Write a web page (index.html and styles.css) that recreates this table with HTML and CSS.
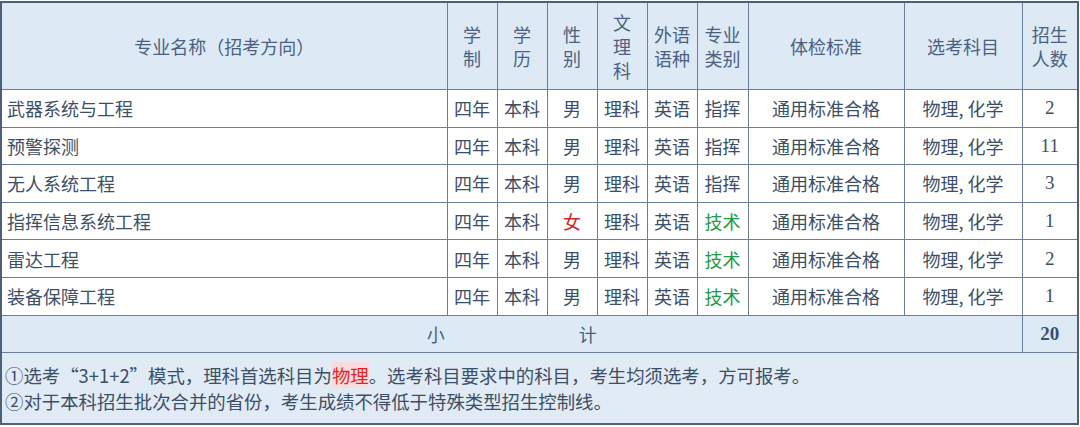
FILE: index.html
```html
<!DOCTYPE html>
<html lang="zh">
<head>
<meta charset="utf-8">
<link rel="stylesheet" href="styles.css">
</head>
<body>
<table class="plan">
  <colgroup>
    <col class="c-name"><col class="c-s"><col class="c-s"><col class="c-s"><col class="c-s"><col class="c-s"><col class="c-s2"><col class="c-tj"><col class="c-xk"><col class="c-n">
  </colgroup>
  <thead>
    <tr class="head">
      <th>专业名称（招考方向）</th>
      <th>学<br>制</th>
      <th>学<br>历</th>
      <th>性<br>别</th>
      <th>文<br>理<br>科</th>
      <th>外语<br>语种</th>
      <th>专业<br>类别</th>
      <th>体检标准</th>
      <th>选考科目</th>
      <th>招生<br>人数</th>
    </tr>
  </thead>
  <tbody>
    <tr class="row"><td class="name">武器系统与工程</td><td>四年</td><td>本科</td><td>男</td><td>理科</td><td>英语</td><td>指挥</td><td>通用标准合格</td><td>物理, 化学</td><td class="num">2</td></tr>
    <tr class="row"><td class="name">预警探测</td><td>四年</td><td>本科</td><td>男</td><td>理科</td><td>英语</td><td>指挥</td><td>通用标准合格</td><td>物理, 化学</td><td class="num">11</td></tr>
    <tr class="row"><td class="name">无人系统工程</td><td>四年</td><td>本科</td><td>男</td><td>理科</td><td>英语</td><td>指挥</td><td>通用标准合格</td><td>物理, 化学</td><td class="num">3</td></tr>
    <tr class="row"><td class="name">指挥信息系统工程</td><td>四年</td><td>本科</td><td class="red">女</td><td>理科</td><td>英语</td><td class="green">技术</td><td>通用标准合格</td><td>物理, 化学</td><td class="num">1</td></tr>
    <tr class="row"><td class="name">雷达工程</td><td>四年</td><td>本科</td><td>男</td><td>理科</td><td>英语</td><td class="green">技术</td><td>通用标准合格</td><td>物理, 化学</td><td class="num">2</td></tr>
    <tr class="row"><td class="name">装备保障工程</td><td>四年</td><td>本科</td><td>男</td><td>理科</td><td>英语</td><td class="green">技术</td><td>通用标准合格</td><td>物理, 化学</td><td class="num">1</td></tr>
    <tr class="sub"><td colspan="9"><span>小</span><span class="gap"></span><span>计</span></td><td class="num total">20</td></tr>
    <tr class="note"><td colspan="10">①选考“3+1+2”模式，理科首选科目为<span class="hl">物理</span>。选考科目要求中的科目，考生均须选考，方可报考。<br>②对于本科招生批次合并的省份，考生成绩不得低于特殊类型招生控制线。</td></tr>
  </tbody>
</table>
</body>
</html>
```
FILE: styles.css
```css
html, body {
  margin: 0;
  padding: 0;
  background: #ffffff;
}
body {
  padding-top: 1px;
  font-family: "Noto Sans CJK SC", "Noto Sans", sans-serif;
  color: #3d4f66;
}
.plan {
  border-collapse: collapse;
  table-layout: fixed;
  width: 1079px;
  border: 2px solid #4c6079;
  font-size: 18px;
}
.c-name { width: 446px; }
.c-s { width: 50px; }
.c-s2 { width: 51px; }
.c-tj { width: 156px; }
.c-xk { width: 118px; }
.c-n { width: 56px; }
.plan th, .plan td {
  border: 1px solid #6b7f99;
  padding: 0;
  text-align: center;
  font-weight: normal;
  line-height: 24px;
}
.head th {
  height: 86px;
  background: #dde9f5;
  color: #4a6282;
  line-height: 24px;
}
.row td { height: 36.6px; }
.row td.name {
  text-align: left;
  padding-left: 5px;
}
.num {
  font-family: "Liberation Serif", "DejaVu Serif", serif;
  font-size: 19px;
}
.red { color: #d2231f; }
.green { color: #1f9b46; }
.sub td {
  background: #dde9f5;
  color: #4a6282;
  height: 36px;
}
.gap {
  display: inline-block;
  width: 134px;
}
.sub td.total {
  font-weight: bold;
  color: #34507a;
}
.note td {
  background: #e0ebf6;
  text-align: left;
  padding-left: 3px;
  font-size: 18.4px;
  line-height: 26px;
  height: 70px;
  vertical-align: middle;
  color: #3d4f66;
}
.hl {
  color: #e2231f;
  background: #f9dcdd;
}
```
